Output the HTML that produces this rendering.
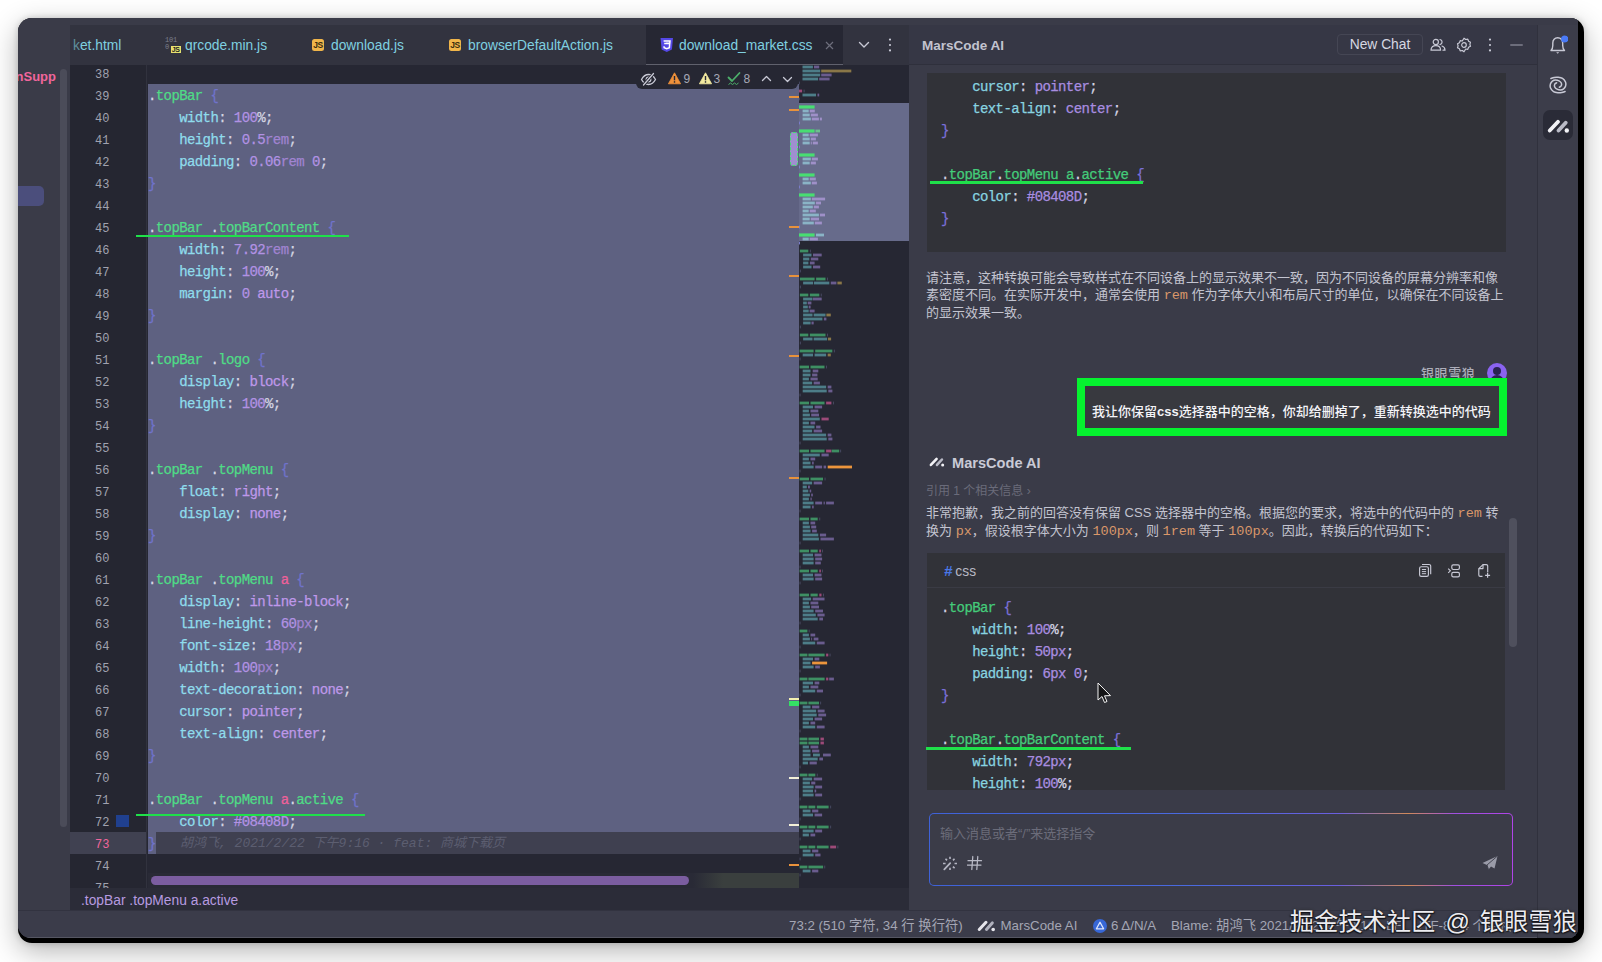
<!DOCTYPE html>
<html lang="zh-CN">
<head>
<meta charset="utf-8">
<title>MarsCode AI - download_market.css</title>
<style>
*{box-sizing:border-box;margin:0;padding:0}
html,body{width:1602px;height:962px;overflow:hidden;background:#fff}
body{font-family:"Liberation Sans","Noto Sans CJK SC",sans-serif;font-size:13px;color:#c9cad6;position:relative}
.abs{position:absolute}
.mono{font-family:"Liberation Mono","Noto Sans CJK SC",monospace}
#shadow{left:18px;top:18px;width:1566px;height:925px;border-radius:14px;background:#000;box-shadow:0 8px 28px rgba(0,0,0,.30),0 0 6px rgba(0,0,0,.18);overflow:hidden}
#win{left:0;top:0;width:1560px;height:920px;border-radius:13px 3px 9px 13px;background:#3b3c4a;overflow:hidden}
/* everything inside #win is positioned relative to the page: offset -18 */
#win>.in{position:absolute;left:-18px;top:-18px;width:1602px;height:962px}
#topstrip{left:18px;top:18px;width:1560px;height:7px;background:#3a3b48}
#sidebar{left:18px;top:25px;width:52px;height:885px;background:#3a3b48}
#tabbar{left:70px;top:25px;width:839px;height:40px;background:#32333f}
.tab{top:25px;height:40px;line-height:41px;font-size:13.8px;color:#7fd0e0;white-space:nowrap}
#editor{left:70px;top:65px;width:839px;height:823px;background:#262733;overflow:hidden}
#gutter{left:70px;top:65px;width:76px;height:823px;background:#252631}
.ln{left:70px;width:39.5px;text-align:right;font-size:12px;height:22px;line-height:22px;color:#a0a2af}
.cl{left:148px;height:22px;line-height:22px;font-size:14px;letter-spacing:-.6px;-webkit-text-stroke:.25px currentColor;white-space:pre;color:#d4d5e2}
.g{color:#4fdc86}.p{color:#8fdcec}.b{color:#7073cc}.v{color:#b292e4}.u{color:#a184d2}.k{color:#bf98ea}.t{color:#f0609a}.w{color:#d9dae6}
#crumb{left:70px;top:888px;width:839px;height:22px;background:#2b2c38;color:#b79be0;font-size:13.8px;line-height:25px;padding-left:11px}
#status{left:18px;top:910px;width:1560px;height:28px;background:#3b3c4a;font-size:13px;color:#a3a5b3;line-height:30px}
#ai{left:909px;top:25px;width:629px;height:885px;background:#3a3b48}
#aihead{left:909px;top:25px;width:629px;height:40px;background:#363745;border-bottom:1px solid #2f303c}
#rstrip{left:1537px;top:25px;width:41px;height:913px;background:#3c3d4a;border-left:1px solid #30313d}
.cb{background:#313238}
.al{height:22px;line-height:22px;font-size:14px;letter-spacing:-.6px;-webkit-text-stroke:.25px currentColor;white-space:pre;color:#d4d5e2}
.ag{color:#44cc7a}.ap{color:#88d4e0}.ab{color:#7b70d8}.av{color:#a98de0}.aw{color:#d4d5e2}
.para{font-size:13px;line-height:17px;color:#c3c4d0}
.or{color:#d9976a;font-family:"Liberation Mono",monospace;font-size:13.5px}
.gl{background:#1fe04a;height:2px}
</style>
</head>
<body>
<div id="shadow" class="abs"><div id="win" class="abs"><div class="in">
<div id="topstrip" class="abs"></div>
<div id="sidebar" class="abs"></div>
<div class="abs" style="left:18px;top:186px;width:26px;height:20px;background:#4b4e7c;border-radius:0 5px 5px 0"></div>
<div class="abs" style="left:60px;top:69px;width:7px;height:758px;background:#4b4c59;border-radius:4px"></div>
<div class="abs" style="left:8px;top:67px;width:48px;height:20px;line-height:20px;font-size:13px;font-weight:bold;color:#f0669c;white-space:nowrap;overflow:hidden;text-align:right">nSupp</div>
<div id="tabbar" class="abs"></div>
<div class="abs" style="left:646px;top:25px;width:197px;height:40px;background:#262733"></div>
<div class="abs" style="left:646px;top:64px;width:197px;height:1.5px;background:#60616d"></div>
<div class="abs tab" style="left:73px"><span style="color:#5e8f9c">k</span>et.html</div>
<div class="abs tab" style="left:185px">qrcode.min.js</div>
<div class="abs tab" style="left:331px">download.js</div>
<div class="abs tab" style="left:468px">browserDefaultAction.js</div>
<div class="abs tab" style="left:679px">download_market.css</div>
<svg class="abs" style="left:824.5px;top:40.500px" width="9" height="9" viewBox="0 0 9 9"><path d="M1 1l7 7M8 1L1 8" stroke="#6d6e7c" stroke-width="1.200"/></svg>
<div id="editor" class="abs"></div>
<div id="gutter" class="abs"></div>
<div class="abs" style="left:146px;top:65px;width:1px;height:823px;background:#31323e"></div>
<div class="abs" style="left:148px;top:84px;width:651px;height:748px;background:#5e6181"></div>
<div class="abs" style="left:70px;top:832px;width:76px;height:22px;background:#404151"></div>
<div class="abs" style="left:156px;top:832px;width:643px;height:22px;background:#3f4050"></div>
<div class="abs" style="left:148px;top:832px;width:8px;height:22px;background:#5e6181"></div>
<div class="abs ln mono" style="top:64px">38</div>
<div class="abs ln mono" style="top:86px">39</div>
<div class="abs cl mono" style="top:85px"><span class="w">.</span><span class="g">topBar</span> <span class="b">{</span></div>
<div class="abs ln mono" style="top:108px">40</div>
<div class="abs cl mono" style="top:107px">    <span class="p">width</span>: <span class="v">100</span>%;</div>
<div class="abs ln mono" style="top:130px">41</div>
<div class="abs cl mono" style="top:129px">    <span class="p">height</span>: <span class="v">0.5</span><span class="u">rem</span>;</div>
<div class="abs ln mono" style="top:152px">42</div>
<div class="abs cl mono" style="top:151px">    <span class="p">padding</span>: <span class="v">0.06</span><span class="u">rem</span> <span class="v">0</span>;</div>
<div class="abs ln mono" style="top:174px">43</div>
<div class="abs cl mono" style="top:173px"><span class="b">}</span></div>
<div class="abs ln mono" style="top:196px">44</div>
<div class="abs ln mono" style="top:218px">45</div>
<div class="abs cl mono" style="top:217px"><span class="w">.</span><span class="g">topBar</span> <span class="w">.</span><span class="g">topBarContent</span> <span class="b">{</span></div>
<div class="abs ln mono" style="top:240px">46</div>
<div class="abs cl mono" style="top:239px">    <span class="p">width</span>: <span class="v">7.92</span><span class="u">rem</span>;</div>
<div class="abs ln mono" style="top:262px">47</div>
<div class="abs cl mono" style="top:261px">    <span class="p">height</span>: <span class="v">100</span>%;</div>
<div class="abs ln mono" style="top:284px">48</div>
<div class="abs cl mono" style="top:283px">    <span class="p">margin</span>: <span class="v">0</span> <span class="k">auto</span>;</div>
<div class="abs ln mono" style="top:306px">49</div>
<div class="abs cl mono" style="top:305px"><span class="b">}</span></div>
<div class="abs ln mono" style="top:328px">50</div>
<div class="abs ln mono" style="top:350px">51</div>
<div class="abs cl mono" style="top:349px"><span class="w">.</span><span class="g">topBar</span> <span class="w">.</span><span class="g">logo</span> <span class="b">{</span></div>
<div class="abs ln mono" style="top:372px">52</div>
<div class="abs cl mono" style="top:371px">    <span class="p">display</span>: <span class="k">block</span>;</div>
<div class="abs ln mono" style="top:394px">53</div>
<div class="abs cl mono" style="top:393px">    <span class="p">height</span>: <span class="v">100</span>%;</div>
<div class="abs ln mono" style="top:416px">54</div>
<div class="abs cl mono" style="top:415px"><span class="b">}</span></div>
<div class="abs ln mono" style="top:438px">55</div>
<div class="abs ln mono" style="top:460px">56</div>
<div class="abs cl mono" style="top:459px"><span class="w">.</span><span class="g">topBar</span> <span class="w">.</span><span class="g">topMenu</span> <span class="b">{</span></div>
<div class="abs ln mono" style="top:482px">57</div>
<div class="abs cl mono" style="top:481px">    <span class="p">float</span>: <span class="k">right</span>;</div>
<div class="abs ln mono" style="top:504px">58</div>
<div class="abs cl mono" style="top:503px">    <span class="p">display</span>: <span class="k">none</span>;</div>
<div class="abs ln mono" style="top:526px">59</div>
<div class="abs cl mono" style="top:525px"><span class="b">}</span></div>
<div class="abs ln mono" style="top:548px">60</div>
<div class="abs ln mono" style="top:570px">61</div>
<div class="abs cl mono" style="top:569px"><span class="w">.</span><span class="g">topBar</span> <span class="w">.</span><span class="g">topMenu</span> <span class="t">a</span> <span class="b">{</span></div>
<div class="abs ln mono" style="top:592px">62</div>
<div class="abs cl mono" style="top:591px">    <span class="p">display</span>: <span class="k">inline-block</span>;</div>
<div class="abs ln mono" style="top:614px">63</div>
<div class="abs cl mono" style="top:613px">    <span class="p">line-height</span>: <span class="v">60</span><span class="u">px</span>;</div>
<div class="abs ln mono" style="top:636px">64</div>
<div class="abs cl mono" style="top:635px">    <span class="p">font-size</span>: <span class="v">18</span><span class="u">px</span>;</div>
<div class="abs ln mono" style="top:658px">65</div>
<div class="abs cl mono" style="top:657px">    <span class="p">width</span>: <span class="v">100</span><span class="u">px</span>;</div>
<div class="abs ln mono" style="top:680px">66</div>
<div class="abs cl mono" style="top:679px">    <span class="p">text-decoration</span>: <span class="k">none</span>;</div>
<div class="abs ln mono" style="top:702px">67</div>
<div class="abs cl mono" style="top:701px">    <span class="p">cursor</span>: <span class="k">pointer</span>;</div>
<div class="abs ln mono" style="top:724px">68</div>
<div class="abs cl mono" style="top:723px">    <span class="p">text-align</span>: <span class="k">center</span>;</div>
<div class="abs ln mono" style="top:746px">69</div>
<div class="abs cl mono" style="top:745px"><span class="b">}</span></div>
<div class="abs ln mono" style="top:768px">70</div>
<div class="abs ln mono" style="top:790px">71</div>
<div class="abs cl mono" style="top:789px"><span class="w">.</span><span class="g">topBar</span> <span class="w">.</span><span class="g">topMenu</span> <span class="t">a</span><span class="w">.</span><span class="g">active</span> <span class="b">{</span></div>
<div class="abs ln mono" style="top:812px">72</div>
<div class="abs cl mono" style="top:811px">    <span class="p">color</span>: <span class="v">#08408D</span>;</div>
<div class="abs ln mono" style="top:834px;color:#f0669c">73</div>
<div class="abs cl mono" style="top:833px"><span class="b">}</span></div>
<div class="abs ln mono" style="top:856px">74</div>
<div class="abs ln mono" style="top:878px">75</div>
<div class="abs mono" style="left:180px;top:833px;height:22px;line-height:22px;font-size:13px;font-style:italic;color:#5c5e70;white-space:pre">胡鸿飞, 2021/2/22 下午9:16 · feat: 商城下载页</div>
<div class="abs" style="left:116px;top:815px;width:13px;height:12px;background:#20408f"></div>
<div class="abs gl" style="left:136px;top:235px;width:213px"></div>
<div class="abs gl" style="left:136px;top:814px;width:229px"></div>
<div class="abs" style="left:148px;top:873px;width:651px;height:15px;background:linear-gradient(90deg,#292a36 0,#292a36 545px,#3a3f3e 575px,#3a3f3e 100%)"></div>
<div class="abs" style="left:151px;top:876px;width:538px;height:9px;background:#7b5da0;border-radius:5px"></div>
<div class="abs" style="left:636px;top:65px;width:162px;height:24px;background:#262733;border-radius:0 0 6px 6px"></div>
<svg class="abs" style="left:799px;top:65px" width="110" height="823" viewBox="0 0 110 823"><rect x="0" y="0" width="110" height="823" fill="#262733"/><rect x="0" y="38" width="110" height="138" fill="#676b8b"/><rect x="3.5" y="0.6" width="10.4" height="2.8" fill="#4d7d88"/><rect x="15.0" y="0.6" width="5.2" height="2.8" fill="#6a5c8e"/><rect x="3.5" y="4.6" width="17.7" height="2.8" fill="#4d7d88"/><rect x="22.2" y="4.6" width="30.1" height="2.8" fill="#8a7748"/><rect x="3.5" y="8.6" width="17.7" height="2.8" fill="#4d7d88"/><rect x="22.2" y="8.6" width="10.4" height="2.8" fill="#6a5c8e"/><rect x="3.5" y="12.6" width="15.6" height="2.8" fill="#4d7d88"/><rect x="20.2" y="12.6" width="10.4" height="2.8" fill="#6a5c8e"/><rect x="0.0" y="16.6" width="0.8" height="2.8" fill="#4a4c66"/><rect x="0.0" y="24.6" width="3.1" height="2.8" fill="#9c4a78"/><rect x="4.6" y="24.6" width="1.0" height="2.8" fill="#4a4c66"/><rect x="3.5" y="28.6" width="13.5" height="2.8" fill="#4d7d88"/><rect x="18.5" y="28.6" width="1.7" height="2.8" fill="#6a5c8e"/><rect x="0.0" y="32.6" width="0.8" height="2.8" fill="#4a4c66"/><rect x="0.0" y="40.4" width="15.6" height="3.2" fill="#48de72"/><rect x="3.6" y="44.6" width="6.1" height="2.8" fill="#8ab4c6"/><rect x="10.7" y="44.6" width="5.1" height="2.8" fill="#9f90c8"/><rect x="3.6" y="48.6" width="7.1" height="2.8" fill="#8ab4c6"/><rect x="11.8" y="48.6" width="7.1" height="2.8" fill="#9f90c8"/><rect x="3.6" y="52.6" width="8.2" height="2.8" fill="#8ab4c6"/><rect x="12.8" y="52.6" width="7.1" height="2.8" fill="#9f90c8"/><rect x="20.9" y="52.6" width="2.0" height="2.8" fill="#9f90c8"/><rect x="0.0" y="56.6" width="1.0" height="2.8" fill="#7a7cc8"/><rect x="0.0" y="64.4" width="15.6" height="3.2" fill="#48de72"/><rect x="16.5" y="64.6" width="4.5" height="2.8" fill="#6ec08f"/><rect x="3.6" y="68.6" width="6.1" height="2.8" fill="#8ab4c6"/><rect x="10.7" y="68.6" width="8.2" height="2.8" fill="#9f90c8"/><rect x="3.6" y="72.6" width="7.1" height="2.8" fill="#8ab4c6"/><rect x="11.8" y="72.6" width="5.1" height="2.8" fill="#9f90c8"/><rect x="3.6" y="76.6" width="7.1" height="2.8" fill="#8ab4c6"/><rect x="11.8" y="76.6" width="1.0" height="2.8" fill="#9f90c8"/><rect x="13.8" y="76.6" width="5.1" height="2.8" fill="#9f90c8"/><rect x="0.0" y="80.6" width="1.0" height="2.8" fill="#7a7cc8"/><rect x="0.0" y="88.4" width="15.6" height="3.2" fill="#48de72"/><rect x="3.6" y="92.6" width="8.2" height="2.8" fill="#8ab4c6"/><rect x="12.8" y="92.6" width="6.1" height="2.8" fill="#9f90c8"/><rect x="3.6" y="96.6" width="7.1" height="2.8" fill="#8ab4c6"/><rect x="11.8" y="96.6" width="5.1" height="2.8" fill="#9f90c8"/><rect x="0.0" y="100.6" width="1.0" height="2.8" fill="#7a7cc8"/><rect x="0.0" y="108.4" width="15.6" height="3.2" fill="#48de72"/><rect x="3.6" y="112.6" width="6.1" height="2.8" fill="#8ab4c6"/><rect x="10.7" y="112.6" width="6.1" height="2.8" fill="#9f90c8"/><rect x="3.6" y="116.6" width="8.2" height="2.8" fill="#8ab4c6"/><rect x="12.8" y="116.6" width="5.1" height="2.8" fill="#9f90c8"/><rect x="0.0" y="120.6" width="1.0" height="2.8" fill="#7a7cc8"/><rect x="0.0" y="128.4" width="15.6" height="3.2" fill="#48de72"/><rect x="3.6" y="132.6" width="8.2" height="2.8" fill="#8ab4c6"/><rect x="12.8" y="132.6" width="13.3" height="2.8" fill="#9f90c8"/><rect x="3.6" y="136.6" width="12.2" height="2.8" fill="#8ab4c6"/><rect x="16.9" y="136.6" width="5.1" height="2.8" fill="#9f90c8"/><rect x="3.6" y="140.6" width="10.2" height="2.8" fill="#8ab4c6"/><rect x="14.8" y="140.6" width="5.1" height="2.8" fill="#9f90c8"/><rect x="3.6" y="144.6" width="6.1" height="2.8" fill="#8ab4c6"/><rect x="10.7" y="144.6" width="6.1" height="2.8" fill="#9f90c8"/><rect x="3.6" y="148.6" width="16.3" height="2.8" fill="#8ab4c6"/><rect x="20.9" y="148.6" width="5.1" height="2.8" fill="#9f90c8"/><rect x="3.6" y="152.6" width="7.1" height="2.8" fill="#8ab4c6"/><rect x="11.8" y="152.6" width="8.2" height="2.8" fill="#9f90c8"/><rect x="3.6" y="156.6" width="11.2" height="2.8" fill="#8ab4c6"/><rect x="15.8" y="156.6" width="7.1" height="2.8" fill="#9f90c8"/><rect x="0.0" y="160.6" width="1.0" height="2.8" fill="#7a7cc8"/><rect x="0.0" y="168.4" width="15.6" height="3.2" fill="#48de72"/><rect x="17.0" y="168.6" width="8.0" height="2.8" fill="#8ab4c6"/><rect x="3.6" y="172.6" width="6.1" height="2.8" fill="#8ab4c6"/><rect x="10.7" y="172.6" width="8.2" height="2.8" fill="#9f90c8"/><rect x="0.0" y="176.6" width="1.0" height="2.8" fill="#7a7cc8"/><rect x="0.9" y="184.6" width="8.4" height="2.8" fill="#3e8f63"/><rect x="10.9" y="184.6" width="0.9" height="2.8" fill="#4a4c66"/><rect x="4.1" y="188.6" width="8.4" height="2.8" fill="#4d7d88"/><rect x="14.0" y="188.6" width="8.7" height="2.8" fill="#6a5c8e"/><rect x="4.1" y="192.6" width="6.2" height="2.8" fill="#4d7d88"/><rect x="11.8" y="192.6" width="7.5" height="2.8" fill="#6a5c8e"/><rect x="4.1" y="196.6" width="5.3" height="2.8" fill="#4d7d88"/><rect x="10.9" y="196.6" width="4.7" height="2.8" fill="#6a5c8e"/><rect x="4.1" y="200.6" width="8.4" height="2.8" fill="#4d7d88"/><rect x="14.0" y="200.6" width="7.2" height="2.8" fill="#6a5c8e"/><rect x="0.9" y="204.6" width="0.9" height="2.8" fill="#4a4c66"/><rect x="0.9" y="212.6" width="14.7" height="2.8" fill="#3e8f63"/><rect x="17.1" y="212.6" width="9.4" height="2.8" fill="#3e8f63"/><rect x="28.1" y="212.6" width="0.9" height="2.8" fill="#4a4c66"/><rect x="4.1" y="216.6" width="10.0" height="2.8" fill="#4d7d88"/><rect x="15.0" y="216.6" width="15.3" height="2.8" fill="#4d7d88"/><rect x="31.8" y="216.6" width="5.6" height="2.8" fill="#6a5c8e"/><rect x="38.4" y="216.6" width="4.4" height="2.8" fill="#8a7748"/><rect x="0.9" y="220.6" width="0.9" height="2.8" fill="#4a4c66"/><rect x="0.9" y="228.6" width="8.4" height="2.8" fill="#3e8f63"/><rect x="10.9" y="228.6" width="9.4" height="2.8" fill="#3e8f63"/><rect x="21.8" y="228.6" width="0.9" height="2.8" fill="#4a4c66"/><rect x="4.1" y="232.6" width="9.4" height="2.8" fill="#4d7d88"/><rect x="14.0" y="232.6" width="8.7" height="2.8" fill="#6a5c8e"/><rect x="4.1" y="236.6" width="3.7" height="2.8" fill="#4d7d88"/><rect x="8.7" y="236.6" width="3.7" height="2.8" fill="#6a5c8e"/><rect x="4.1" y="240.6" width="4.7" height="2.8" fill="#4d7d88"/><rect x="9.7" y="240.6" width="1.9" height="2.8" fill="#6a5c8e"/><rect x="4.1" y="244.6" width="5.6" height="2.8" fill="#4d7d88"/><rect x="10.6" y="244.6" width="5.0" height="2.8" fill="#6a5c8e"/><rect x="4.1" y="248.6" width="9.4" height="2.8" fill="#4d7d88"/><rect x="14.7" y="248.6" width="11.8" height="2.8" fill="#4d7d88"/><rect x="27.4" y="248.6" width="4.4" height="2.8" fill="#8a7748"/><rect x="4.1" y="252.6" width="19.3" height="2.8" fill="#4d7d88"/><rect x="24.9" y="252.6" width="2.5" height="2.8" fill="#6a5c8e"/><rect x="4.1" y="256.6" width="7.5" height="2.8" fill="#4d7d88"/><rect x="12.5" y="256.6" width="2.2" height="2.8" fill="#6a5c8e"/><rect x="0.9" y="260.6" width="0.9" height="2.8" fill="#4a4c66"/><rect x="0.9" y="268.6" width="8.4" height="2.8" fill="#3e8f63"/><rect x="10.9" y="268.6" width="15.6" height="2.8" fill="#3e8f63"/><rect x="28.1" y="268.6" width="0.9" height="2.8" fill="#4a4c66"/><rect x="4.1" y="272.6" width="9.4" height="2.8" fill="#4d7d88"/><rect x="14.7" y="272.6" width="13.4" height="2.8" fill="#4d7d88"/><rect x="29.0" y="272.6" width="3.1" height="2.8" fill="#8a7748"/><rect x="0.9" y="276.6" width="0.9" height="2.8" fill="#4a4c66"/><rect x="0.6" y="284.6" width="14.0" height="2.8" fill="#3e8f63"/><rect x="16.2" y="284.6" width="17.1" height="2.8" fill="#3e8f63"/><rect x="34.9" y="284.6" width="0.9" height="2.8" fill="#4a4c66"/><rect x="3.7" y="288.6" width="10.3" height="2.8" fill="#4d7d88"/><rect x="15.6" y="288.6" width="11.5" height="2.8" fill="#4d7d88"/><rect x="28.7" y="288.6" width="3.1" height="2.8" fill="#8a7748"/><rect x="0.6" y="292.6" width="0.9" height="2.8" fill="#4a4c66"/><rect x="0.6" y="300.6" width="9.4" height="2.8" fill="#3e8f63"/><rect x="11.5" y="300.6" width="14.0" height="2.8" fill="#3e8f63"/><rect x="27.1" y="300.6" width="0.9" height="2.8" fill="#4a4c66"/><rect x="3.7" y="304.6" width="7.8" height="2.8" fill="#4d7d88"/><rect x="13.7" y="304.6" width="5.6" height="2.8" fill="#6a5c8e"/><rect x="3.7" y="308.6" width="7.8" height="2.8" fill="#4d7d88"/><rect x="13.1" y="308.6" width="5.3" height="2.8" fill="#6a5c8e"/><rect x="3.7" y="312.6" width="6.2" height="2.8" fill="#4d7d88"/><rect x="11.5" y="312.6" width="7.2" height="2.8" fill="#6a5c8e"/><rect x="3.7" y="316.6" width="9.4" height="2.8" fill="#4d7d88"/><rect x="14.7" y="316.6" width="6.2" height="2.8" fill="#6a5c8e"/><rect x="3.7" y="320.6" width="23.4" height="2.8" fill="#4d7d88"/><rect x="28.7" y="320.6" width="3.7" height="2.8" fill="#6a5c8e"/><rect x="3.7" y="324.6" width="24.0" height="2.8" fill="#4d7d88"/><rect x="29.3" y="324.6" width="4.1" height="2.8" fill="#6a5c8e"/><rect x="0.6" y="328.6" width="0.9" height="2.8" fill="#4a4c66"/><rect x="0.6" y="336.6" width="9.4" height="2.8" fill="#3e8f63"/><rect x="11.5" y="336.6" width="14.0" height="2.8" fill="#3e8f63"/><rect x="27.1" y="336.6" width="5.3" height="2.8" fill="#9c4a78"/><rect x="34.0" y="336.6" width="0.9" height="2.8" fill="#4a4c66"/><rect x="3.7" y="340.6" width="10.3" height="2.8" fill="#4d7d88"/><rect x="15.6" y="340.6" width="7.5" height="2.8" fill="#6a5c8e"/><rect x="3.7" y="344.6" width="6.2" height="2.8" fill="#4d7d88"/><rect x="11.5" y="344.6" width="7.8" height="2.8" fill="#6a5c8e"/><rect x="3.7" y="348.6" width="7.2" height="2.8" fill="#4d7d88"/><rect x="12.2" y="348.6" width="7.8" height="2.8" fill="#6a5c8e"/><rect x="3.7" y="352.6" width="17.1" height="2.8" fill="#4d7d88"/><rect x="22.5" y="352.6" width="7.2" height="2.8" fill="#9c4a78"/><rect x="3.7" y="356.6" width="6.2" height="2.8" fill="#4d7d88"/><rect x="11.5" y="356.6" width="4.7" height="2.8" fill="#6a5c8e"/><rect x="3.7" y="360.6" width="11.8" height="2.8" fill="#4d7d88"/><rect x="17.1" y="360.6" width="4.4" height="2.8" fill="#6a5c8e"/><rect x="3.7" y="364.6" width="9.4" height="2.8" fill="#4d7d88"/><rect x="14.7" y="364.6" width="8.4" height="2.8" fill="#6a5c8e"/><rect x="3.7" y="368.6" width="23.4" height="2.8" fill="#4d7d88"/><rect x="28.7" y="368.6" width="3.7" height="2.8" fill="#6a5c8e"/><rect x="3.7" y="372.6" width="24.0" height="2.8" fill="#4d7d88"/><rect x="29.3" y="372.6" width="4.1" height="2.8" fill="#6a5c8e"/><rect x="0.6" y="376.6" width="0.9" height="2.8" fill="#4a4c66"/><rect x="0.6" y="384.6" width="9.4" height="2.8" fill="#3e8f63"/><rect x="11.5" y="384.6" width="14.0" height="2.8" fill="#3e8f63"/><rect x="27.1" y="384.6" width="5.3" height="2.8" fill="#9c4a78"/><rect x="32.7" y="384.6" width="7.5" height="2.8" fill="#3e8f63"/><rect x="41.2" y="384.6" width="0.9" height="2.8" fill="#4a4c66"/><rect x="3.7" y="388.6" width="17.1" height="2.8" fill="#4d7d88"/><rect x="22.5" y="388.6" width="7.2" height="2.8" fill="#6a5c8e"/><rect x="3.7" y="392.6" width="6.2" height="2.8" fill="#4d7d88"/><rect x="11.5" y="392.6" width="4.7" height="2.8" fill="#6a5c8e"/><rect x="3.7" y="396.6" width="7.8" height="2.8" fill="#4d7d88"/><rect x="13.1" y="396.6" width="1.6" height="2.8" fill="#6a5c8e"/><rect x="3.7" y="400.6" width="10.9" height="2.8" fill="#4d7d88"/><rect x="16.2" y="400.6" width="6.9" height="2.8" fill="#6a5c8e"/><rect x="24.6" y="400.6" width="2.5" height="2.8" fill="#6a5c8e"/><rect x="28.7" y="400.6" width="24.3" height="2.8" fill="#ec953c"/><rect x="0.6" y="404.6" width="0.9" height="2.8" fill="#4a4c66"/><rect x="0.6" y="412.6" width="9.4" height="2.8" fill="#3e8f63"/><rect x="11.5" y="412.6" width="12.5" height="2.8" fill="#3e8f63"/><rect x="25.6" y="412.6" width="0.9" height="2.8" fill="#4a4c66"/><rect x="3.7" y="416.6" width="9.4" height="2.8" fill="#4d7d88"/><rect x="14.7" y="416.6" width="8.4" height="2.8" fill="#6a5c8e"/><rect x="3.7" y="420.6" width="4.1" height="2.8" fill="#4d7d88"/><rect x="9.0" y="420.6" width="1.9" height="2.8" fill="#6a5c8e"/><rect x="3.7" y="424.6" width="5.6" height="2.8" fill="#4d7d88"/><rect x="10.6" y="424.6" width="1.6" height="2.8" fill="#6a5c8e"/><rect x="3.7" y="428.6" width="7.2" height="2.8" fill="#4d7d88"/><rect x="12.2" y="428.6" width="1.6" height="2.8" fill="#6a5c8e"/><rect x="3.7" y="432.6" width="6.2" height="2.8" fill="#4d7d88"/><rect x="11.5" y="432.6" width="1.2" height="2.8" fill="#6a5c8e"/><rect x="3.7" y="436.6" width="10.9" height="2.8" fill="#4d7d88"/><rect x="16.2" y="436.6" width="6.9" height="2.8" fill="#6a5c8e"/><rect x="24.6" y="436.6" width="1.2" height="2.8" fill="#6a5c8e"/><rect x="27.1" y="436.6" width="7.8" height="2.8" fill="#6a5c8e"/><rect x="3.7" y="440.6" width="7.8" height="2.8" fill="#4d7d88"/><rect x="13.1" y="440.6" width="1.6" height="2.8" fill="#6a5c8e"/><rect x="0.6" y="444.6" width="0.9" height="2.8" fill="#4a4c66"/><rect x="0.6" y="452.6" width="9.4" height="2.8" fill="#3e8f63"/><rect x="11.5" y="452.6" width="7.2" height="2.8" fill="#3e8f63"/><rect x="20.3" y="452.6" width="0.9" height="2.8" fill="#4a4c66"/><rect x="3.7" y="456.6" width="6.2" height="2.8" fill="#4d7d88"/><rect x="11.5" y="456.6" width="4.7" height="2.8" fill="#6a5c8e"/><rect x="3.7" y="460.6" width="7.2" height="2.8" fill="#4d7d88"/><rect x="12.2" y="460.6" width="5.0" height="2.8" fill="#6a5c8e"/><rect x="3.7" y="464.6" width="7.8" height="2.8" fill="#4d7d88"/><rect x="13.1" y="464.6" width="4.7" height="2.8" fill="#6a5c8e"/><rect x="3.7" y="468.6" width="15.6" height="2.8" fill="#4d7d88"/><rect x="20.9" y="468.6" width="6.2" height="2.8" fill="#6a5c8e"/><rect x="3.7" y="472.6" width="16.2" height="2.8" fill="#4d7d88"/><rect x="21.5" y="472.6" width="13.4" height="2.8" fill="#6a5c8e"/><rect x="0.6" y="476.6" width="0.9" height="2.8" fill="#4a4c66"/><rect x="0.6" y="484.6" width="9.4" height="2.8" fill="#3e8f63"/><rect x="11.5" y="484.6" width="7.2" height="2.8" fill="#3e8f63"/><rect x="20.3" y="484.6" width="1.6" height="2.8" fill="#9c4a78"/><rect x="23.1" y="484.6" width="0.9" height="2.8" fill="#4a4c66"/><rect x="3.7" y="488.6" width="10.3" height="2.8" fill="#4d7d88"/><rect x="15.6" y="488.6" width="6.9" height="2.8" fill="#6a5c8e"/><rect x="3.7" y="492.6" width="10.9" height="2.8" fill="#4d7d88"/><rect x="16.2" y="492.6" width="6.9" height="2.8" fill="#6a5c8e"/><rect x="3.7" y="496.6" width="10.9" height="2.8" fill="#4d7d88"/><rect x="16.2" y="496.6" width="5.6" height="2.8" fill="#6a5c8e"/><rect x="0.6" y="500.6" width="0.9" height="2.8" fill="#4a4c66"/><rect x="0.6" y="504.6" width="9.4" height="2.8" fill="#3e8f63"/><rect x="11.5" y="504.6" width="7.2" height="2.8" fill="#3e8f63"/><rect x="20.3" y="504.6" width="1.6" height="2.8" fill="#9c4a78"/><rect x="23.1" y="504.6" width="0.9" height="2.8" fill="#4a4c66"/><rect x="3.7" y="508.6" width="10.3" height="2.8" fill="#4d7d88"/><rect x="15.6" y="508.6" width="6.9" height="2.8" fill="#6a5c8e"/><rect x="3.7" y="512.6" width="10.9" height="2.8" fill="#4d7d88"/><rect x="16.2" y="512.6" width="6.9" height="2.8" fill="#6a5c8e"/><rect x="0.6" y="516.6" width="0.9" height="2.8" fill="#4a4c66"/><rect x="0.6" y="528.6" width="9.4" height="2.8" fill="#3e8f63"/><rect x="11.5" y="528.6" width="7.2" height="2.8" fill="#3e8f63"/><rect x="20.3" y="528.6" width="2.2" height="2.8" fill="#9c4a78"/><rect x="24.0" y="528.6" width="0.9" height="2.8" fill="#4a4c66"/><rect x="3.7" y="532.6" width="8.4" height="2.8" fill="#4d7d88"/><rect x="13.7" y="532.6" width="11.8" height="2.8" fill="#6a5c8e"/><rect x="3.7" y="536.6" width="6.2" height="2.8" fill="#4d7d88"/><rect x="11.5" y="536.6" width="7.8" height="2.8" fill="#6a5c8e"/><rect x="3.7" y="540.6" width="7.2" height="2.8" fill="#4d7d88"/><rect x="12.2" y="540.6" width="7.8" height="2.8" fill="#6a5c8e"/><rect x="3.7" y="544.6" width="10.9" height="2.8" fill="#4d7d88"/><rect x="16.2" y="544.6" width="7.8" height="2.8" fill="#6a5c8e"/><rect x="3.7" y="548.6" width="13.1" height="2.8" fill="#4d7d88"/><rect x="18.4" y="548.6" width="7.2" height="2.8" fill="#6a5c8e"/><rect x="3.7" y="552.6" width="15.0" height="2.8" fill="#4d7d88"/><rect x="20.3" y="552.6" width="3.7" height="2.8" fill="#6a5c8e"/><rect x="0.6" y="556.6" width="0.9" height="2.8" fill="#4a4c66"/><rect x="0.6" y="564.6" width="7.8" height="2.8" fill="#3e8f63"/><rect x="9.7" y="564.6" width="0.9" height="2.8" fill="#4a4c66"/><rect x="3.7" y="568.6" width="6.2" height="2.8" fill="#4d7d88"/><rect x="11.5" y="568.6" width="4.7" height="2.8" fill="#6a5c8e"/><rect x="3.7" y="572.6" width="7.2" height="2.8" fill="#4d7d88"/><rect x="12.2" y="572.6" width="0.9" height="2.8" fill="#6a5c8e"/><rect x="14.7" y="572.6" width="4.7" height="2.8" fill="#6a5c8e"/><rect x="3.7" y="576.6" width="12.5" height="2.8" fill="#4d7d88"/><rect x="17.8" y="576.6" width="7.8" height="2.8" fill="#6a5c8e"/><rect x="0.6" y="580.6" width="0.9" height="2.8" fill="#4a4c66"/><rect x="0.6" y="588.6" width="7.8" height="2.8" fill="#3e8f63"/><rect x="9.4" y="588.6" width="16.2" height="2.8" fill="#3e8f63"/><rect x="27.1" y="588.6" width="2.2" height="2.8" fill="#9c4a78"/><rect x="30.6" y="588.6" width="0.9" height="2.8" fill="#4a4c66"/><rect x="3.7" y="592.6" width="10.3" height="2.8" fill="#4d7d88"/><rect x="15.6" y="592.6" width="4.7" height="2.8" fill="#6a5c8e"/><rect x="3.7" y="596.6" width="7.8" height="2.8" fill="#4d7d88"/><rect x="13.1" y="596.6" width="15.0" height="2.8" fill="#ec953c"/><rect x="3.7" y="600.6" width="10.9" height="2.8" fill="#4d7d88"/><rect x="16.2" y="600.6" width="4.7" height="2.8" fill="#6a5c8e"/><rect x="0.6" y="604.6" width="0.9" height="2.8" fill="#4a4c66"/><rect x="0.6" y="612.6" width="7.8" height="2.8" fill="#3e8f63"/><rect x="9.4" y="612.6" width="16.2" height="2.8" fill="#3e8f63"/><rect x="27.1" y="612.6" width="2.2" height="2.8" fill="#9c4a78"/><rect x="30.2" y="612.6" width="4.7" height="2.8" fill="#6a5c8e"/><rect x="3.7" y="616.6" width="10.3" height="2.8" fill="#4d7d88"/><rect x="15.6" y="616.6" width="4.7" height="2.8" fill="#6a5c8e"/><rect x="3.7" y="620.6" width="6.2" height="2.8" fill="#4d7d88"/><rect x="11.5" y="620.6" width="7.8" height="2.8" fill="#6a5c8e"/><rect x="3.7" y="624.6" width="12.5" height="2.8" fill="#4d7d88"/><rect x="17.8" y="624.6" width="6.2" height="2.8" fill="#6a5c8e"/><rect x="0.6" y="628.6" width="0.9" height="2.8" fill="#4a4c66"/><rect x="0.6" y="636.6" width="7.8" height="2.8" fill="#3e8f63"/><rect x="9.4" y="636.6" width="10.6" height="2.8" fill="#3e8f63"/><rect x="21.2" y="636.6" width="0.9" height="2.8" fill="#4a4c66"/><rect x="3.7" y="640.6" width="7.8" height="2.8" fill="#4d7d88"/><rect x="13.1" y="640.6" width="7.2" height="2.8" fill="#6a5c8e"/><rect x="3.7" y="644.6" width="13.4" height="2.8" fill="#4d7d88"/><rect x="18.7" y="644.6" width="6.9" height="2.8" fill="#6a5c8e"/><rect x="3.7" y="648.6" width="14.0" height="2.8" fill="#4d7d88"/><rect x="19.3" y="648.6" width="7.8" height="2.8" fill="#6a5c8e"/><rect x="3.7" y="652.6" width="10.3" height="2.8" fill="#4d7d88"/><rect x="15.6" y="652.6" width="7.5" height="2.8" fill="#6a5c8e"/><rect x="3.7" y="656.6" width="6.2" height="2.8" fill="#4d7d88"/><rect x="11.5" y="656.6" width="4.7" height="2.8" fill="#6a5c8e"/><rect x="3.7" y="660.6" width="12.5" height="2.8" fill="#4d7d88"/><rect x="17.8" y="660.6" width="7.8" height="2.8" fill="#6a5c8e"/><rect x="0.6" y="664.6" width="0.9" height="2.8" fill="#4a4c66"/><rect x="0.6" y="672.6" width="7.8" height="2.8" fill="#3e8f63"/><rect x="9.4" y="672.6" width="10.6" height="2.8" fill="#3e8f63"/><rect x="21.5" y="672.6" width="3.4" height="2.8" fill="#9c4a78"/><rect x="0.6" y="676.6" width="7.8" height="2.8" fill="#3e8f63"/><rect x="9.4" y="676.6" width="10.6" height="2.8" fill="#3e8f63"/><rect x="21.5" y="676.6" width="3.4" height="2.8" fill="#9c4a78"/><rect x="3.7" y="680.6" width="6.2" height="2.8" fill="#4d7d88"/><rect x="11.5" y="680.6" width="7.8" height="2.8" fill="#6a5c8e"/><rect x="3.7" y="684.6" width="7.8" height="2.8" fill="#4d7d88"/><rect x="13.1" y="684.6" width="7.2" height="2.8" fill="#6a5c8e"/><rect x="3.7" y="688.6" width="7.8" height="2.8" fill="#4d7d88"/><rect x="14.0" y="688.6" width="6.9" height="2.8" fill="#4d7d88"/><rect x="24.0" y="688.6" width="7.8" height="2.8" fill="#6a5c8e"/><rect x="3.7" y="692.6" width="15.0" height="2.8" fill="#4d7d88"/><rect x="20.3" y="692.6" width="3.7" height="2.8" fill="#6a5c8e"/><rect x="3.7" y="696.6" width="5.3" height="2.8" fill="#4d7d88"/><rect x="10.6" y="696.6" width="7.2" height="2.8" fill="#6a5c8e"/><rect x="0.6" y="700.6" width="0.9" height="2.8" fill="#4a4c66"/><rect x="0.6" y="708.6" width="7.8" height="2.8" fill="#3e8f63"/><rect x="9.4" y="708.6" width="6.9" height="2.8" fill="#3e8f63"/><rect x="17.8" y="708.6" width="0.9" height="2.8" fill="#4a4c66"/><rect x="3.7" y="712.6" width="9.4" height="2.8" fill="#4d7d88"/><rect x="14.7" y="712.6" width="8.4" height="2.8" fill="#6a5c8e"/><rect x="3.7" y="716.6" width="7.2" height="2.8" fill="#4d7d88"/><rect x="12.2" y="716.6" width="4.1" height="2.8" fill="#6a5c8e"/><rect x="3.7" y="720.6" width="10.9" height="2.8" fill="#4d7d88"/><rect x="16.2" y="720.6" width="6.9" height="2.8" fill="#6a5c8e"/><rect x="3.7" y="724.6" width="10.3" height="2.8" fill="#4d7d88"/><rect x="15.6" y="724.6" width="1.6" height="2.8" fill="#6a5c8e"/><rect x="3.7" y="728.6" width="10.9" height="2.8" fill="#4d7d88"/><rect x="16.2" y="728.6" width="6.9" height="2.8" fill="#6a5c8e"/><rect x="0.6" y="732.6" width="0.9" height="2.8" fill="#4a4c66"/><rect x="0.6" y="740.6" width="7.8" height="2.8" fill="#3e8f63"/><rect x="9.4" y="740.6" width="6.9" height="2.8" fill="#3e8f63"/><rect x="17.8" y="740.6" width="11.8" height="2.8" fill="#3e8f63"/><rect x="31.2" y="740.6" width="0.9" height="2.8" fill="#4a4c66"/><rect x="3.7" y="744.6" width="7.8" height="2.8" fill="#4d7d88"/><rect x="13.1" y="744.6" width="6.2" height="2.8" fill="#6a5c8e"/><rect x="3.7" y="748.6" width="10.3" height="2.8" fill="#4d7d88"/><rect x="15.6" y="748.6" width="7.5" height="2.8" fill="#6a5c8e"/><rect x="0.6" y="752.6" width="0.9" height="2.8" fill="#4a4c66"/><rect x="0.6" y="760.6" width="7.8" height="2.8" fill="#3e8f63"/><rect x="9.4" y="760.6" width="6.9" height="2.8" fill="#3e8f63"/><rect x="17.8" y="760.6" width="11.8" height="2.8" fill="#3e8f63"/><rect x="31.2" y="760.6" width="0.9" height="2.8" fill="#4a4c66"/><rect x="3.7" y="764.6" width="10.9" height="2.8" fill="#4d7d88"/><rect x="16.2" y="764.6" width="6.9" height="2.8" fill="#6a5c8e"/><rect x="3.7" y="768.6" width="6.2" height="2.8" fill="#4d7d88"/><rect x="11.5" y="768.6" width="4.7" height="2.8" fill="#6a5c8e"/><rect x="0.6" y="772.6" width="0.9" height="2.8" fill="#4a4c66"/><rect x="0.6" y="780.6" width="7.8" height="2.8" fill="#3e8f63"/><rect x="9.4" y="780.6" width="6.9" height="2.8" fill="#3e8f63"/><rect x="17.8" y="780.6" width="11.8" height="2.8" fill="#3e8f63"/><rect x="31.2" y="780.6" width="5.9" height="2.8" fill="#9c4a78"/><rect x="38.4" y="780.6" width="0.9" height="2.8" fill="#4a4c66"/><rect x="3.7" y="784.6" width="7.8" height="2.8" fill="#4d7d88"/><rect x="13.1" y="784.6" width="6.2" height="2.8" fill="#6a5c8e"/><rect x="3.7" y="788.6" width="10.9" height="2.8" fill="#4d7d88"/><rect x="16.2" y="788.6" width="5.3" height="2.8" fill="#6a5c8e"/><rect x="0.6" y="792.6" width="0.9" height="2.8" fill="#4a4c66"/><rect x="0.6" y="800.6" width="7.8" height="2.8" fill="#3e8f63"/><rect x="9.4" y="800.6" width="14.7" height="2.8" fill="#3e8f63"/><rect x="25.3" y="800.6" width="0.9" height="2.8" fill="#4a4c66"/><rect x="3.7" y="804.6" width="7.8" height="2.8" fill="#4d7d88"/><rect x="13.1" y="804.6" width="6.2" height="2.8" fill="#6a5c8e"/><rect x="0.6" y="808.6" width="0.9" height="2.8" fill="#4a4c66"/></svg>
<div class="abs" style="left:789px;top:96px;width:10px;height:2px;background:#e8923c"></div>
<div class="abs" style="left:789px;top:109px;width:10px;height:2px;background:#e8923c"></div>
<div class="abs" style="left:789px;top:226px;width:10px;height:2px;background:#e8923c"></div>
<div class="abs" style="left:789px;top:275px;width:10px;height:2px;background:#e8923c"></div>
<div class="abs" style="left:789px;top:355px;width:10px;height:2px;background:#e8923c"></div>
<div class="abs" style="left:789px;top:477px;width:10px;height:2px;background:#e8923c"></div>
<div class="abs" style="left:789px;top:864px;width:10px;height:2px;background:#e8923c"></div>
<div class="abs" style="left:789px;top:777px;width:10px;height:2px;background:#f3f0d8"></div>
<div class="abs" style="left:789px;top:824px;width:10px;height:2px;background:#f3f0d8"></div>
<div class="abs" style="left:789px;top:698px;width:10px;height:2px;background:#f3f0b0"></div>
<div class="abs" style="left:789px;top:701px;width:10px;height:5px;background:#35e065"></div>
<div class="abs" style="left:790px;top:132px;width:8px;height:34px;border:1px dashed #45e070;border-radius:3px;background:#9f8fd0"></div>
<div id="crumb" class="abs">.topBar .topMenu a.active</div>
<div id="status" class="abs"></div>
<div class="abs" style="left:18px;top:910px;width:1560px;height:1px;background:#323340"></div>
<div class="abs" style="left:18px;top:937px;width:1560px;height:1px;background:#565763"></div>
<div class="abs" style="left:789px;top:916px;height:20px;line-height:20px;font-size:13.3px;color:#a4a6b4;white-space:nowrap">73:2 (510 字符, 34 行 换行符)</div>
<div class="abs" style="left:1000.5px;top:916px;height:20px;line-height:20px;font-size:13.3px;color:#a4a6b4;white-space:nowrap">MarsCode AI</div>
<div class="abs" style="left:1111px;top:916px;height:20px;line-height:20px;font-size:13.3px;color:#a4a6b4;white-space:nowrap">6 Δ/N/A</div>
<div class="abs" style="left:1171px;top:916px;height:20px;line-height:20px;font-size:13.3px;color:#a4a6b4;white-space:nowrap">Blame: 胡鸿飞 2021/2/22 下午9:16 &nbsp; LF &nbsp; UTF-8 &nbsp; 4 个空格</div>
<div id="ai" class="abs"></div>
<div id="aihead" class="abs"></div>
<div class="abs" style="left:922px;top:26px;height:40px;line-height:40px;font-size:13.5px;font-weight:bold;color:#c2c3cf">MarsCode AI</div>
<div class="abs" style="left:1337px;top:34px;width:86px;height:21px;border:1px solid #454654;border-radius:4px;line-height:19px;text-align:center;font-size:13.8px;color:#d6d7e2">New Chat</div>
<div class="abs cb" style="left:927px;top:73px;width:579px;height:179px"></div>
<div class="abs al mono" style="left:941px;top:76px">    <span class="ap">cursor</span>: <span class="av">pointer</span>;</div>
<div class="abs al mono" style="left:941px;top:98px">    <span class="ap">text-align</span>: <span class="av">center</span>;</div>
<div class="abs al mono" style="left:941px;top:120px"><span class="ab">}</span></div>
<div class="abs al mono" style="left:941px;top:164px"><span class="aw">.</span><span class="ag">topBar</span><span class="aw">.</span><span class="ag">topMenu</span> <span class="ag">a</span><span class="aw">.</span><span class="ag">active</span> <span class="ab">{</span></div>
<div class="abs al mono" style="left:941px;top:186px">    <span class="ap">color</span>: <span class="av">#08408D</span>;</div>
<div class="abs al mono" style="left:941px;top:208px"><span class="ab">}</span></div>
<div class="abs gl" style="left:930px;top:181px;width:213px;height:3px"></div>
<div class="abs para" style="left:926px;top:269px;width:600px;white-space:nowrap">请注意，这种转换可能会导致样式在不同设备上的显示效果不一致，因为不同设备的屏幕分辨率和像<br>素密度不同。在实际开发中，通常会使用 <span class="or">rem</span> 作为字体大小和布局尺寸的单位，以确保在不同设备上<br>的显示效果一致。</div>
<div class="abs" style="left:1421px;top:364px;height:20px;line-height:20px;font-size:13px;font-weight:500;color:#acadb9;white-space:nowrap;letter-spacing:.6px">银眼雪狼</div>
<div class="abs" style="left:1487px;top:363px;width:20px;height:20px;border-radius:50%;background:#8a63f0;overflow:hidden"><div class="abs" style="left:6px;top:4px;width:8px;height:8px;border-radius:50%;background:#2a2250"></div><div class="abs" style="left:3px;top:12px;width:14px;height:12px;border-radius:7px 7px 0 0;background:#2a2250"></div></div>
<div class="abs" style="left:1077px;top:378px;width:430px;height:58px;background:#38393f;border:8px solid #05f22f"></div>
<div class="abs" style="left:1092px;top:402px;height:20px;line-height:20px;font-size:13px;font-weight:500;color:#f4f4f8;white-space:nowrap">我让你保留<b>css</b>选择器中的空格，你却给删掉了，重新转换选中的代码</div>
<div class="abs" style="left:952px;top:453px;height:20px;line-height:20px;font-size:14.6px;font-weight:bold;color:#c9cad6;white-space:nowrap">MarsCode AI</div>
<div class="abs" style="left:926px;top:482px;height:18px;line-height:18px;font-size:12px;color:#6a6b7a;white-space:nowrap">引用 1 个相关信息 ›</div>
<div class="abs para" style="left:926px;top:504px;width:600px;white-space:nowrap">非常抱歉，我之前的回答没有保留 CSS 选择器中的空格。根据您的要求，将选中的代码中的 <span class="or">rem</span> 转<br>换为 <span class="or">px</span>，假设根字体大小为 <span class="or">100px</span>，则 <span class="or">1rem</span> 等于 <span class="or">100px</span>。因此，转换后的代码如下：</div>
<div class="abs cb" style="left:927px;top:553px;width:578px;height:237px"></div>
<div class="abs" style="left:927px;top:587px;width:579px;height:1px;background:#3a3b44"></div>
<div class="abs" style="left:944px;top:561px;height:20px;line-height:20px;font-size:13px;color:#b7b8c4;white-space:nowrap"><span style="color:#4a78e8;font-weight:bold;font-style:italic;font-size:15px">#</span><span style="font-size:13.8px;margin-left:3px">css</span></div>
<div class="abs al mono" style="left:941px;top:597px"><span class="aw">.</span><span class="ag">topBar</span> <span class="ab">{</span></div>
<div class="abs al mono" style="left:941px;top:619px">    <span class="ap">width</span>: <span class="av">100</span>%;</div>
<div class="abs al mono" style="left:941px;top:641px">    <span class="ap">height</span>: <span class="av">50px</span>;</div>
<div class="abs al mono" style="left:941px;top:663px">    <span class="ap">padding</span>: <span class="av">6px</span> <span class="av">0</span>;</div>
<div class="abs al mono" style="left:941px;top:685px"><span class="ab">}</span></div>
<div class="abs al mono" style="left:941px;top:729px"><span class="aw">.</span><span class="ag">topBar</span><span class="aw">.</span><span class="ag">topBarContent</span> <span class="ab">{</span></div>
<div class="abs al mono" style="left:941px;top:751px">    <span class="ap">width</span>: <span class="av">792px</span>;</div>
<div class="abs mono" style="left:941px;top:773px;height:17px;overflow:hidden"><div class="al">    <span class="ap">height</span>: <span class="av">100</span>%;</div></div>
<div class="abs gl" style="left:926px;top:747px;width:205px;height:3px"></div>
<div class="abs" style="left:1509px;top:518px;width:8px;height:129px;background:#4f505d;border-radius:4px"></div>
<div class="abs" style="left:929px;top:813px;width:584px;height:73px;border-radius:5px;background:linear-gradient(90deg,#3f62d8 0%,#4a6ae0 45%,#6a5fe0 70%,#d08a5a 82%,#a050e0 90%,#b044e8 100%)"></div>
<div class="abs" style="left:930px;top:814px;width:582px;height:71px;border-radius:4px;background:#3b3c48"></div>
<div class="abs" style="left:940px;top:824px;height:20px;line-height:20px;font-size:13px;color:#6b6c7a;white-space:nowrap">输入消息或者“/”来选择指令</div>
<div id="rstrip" class="abs"></div>
<div class="abs" style="left:1543px;top:110px;width:30px;height:30px;border-radius:7px;background:#2a2b37"></div>
<div class="abs" style="left:165px;top:37px;font-size:7px;line-height:7px;color:#7d7f8d;font-family:'Liberation Mono',monospace;letter-spacing:-.2px">101<br>0</div>
<div class="abs" style="left:171px;top:46px;width:9.5px;height:7px;background:#e6e06e;color:#1d1d22;font-size:7px;line-height:7.5px;font-weight:bold;text-align:center;letter-spacing:-.3px">JS</div>
<div class="abs" style="left:312px;top:39px;width:12px;height:12px;border-radius:2.5px;background:#f0b54a;color:#3a2c10;font-size:8.5px;line-height:12.5px;font-weight:bold;text-align:center;letter-spacing:-.4px">JS</div>
<div class="abs" style="left:449px;top:39px;width:12px;height:12px;border-radius:2.5px;background:#f0b54a;color:#3a2c10;font-size:8.5px;line-height:12.5px;font-weight:bold;text-align:center;letter-spacing:-.4px">JS</div>
<svg class="abs" style="left:659.5px;top:38px" width="13.5" height="14" viewBox="0 0 13.5 14" ><path d="M0.5 0h12.5l-1.1 11.6L6.75 14 1.6 11.6z" fill="#5548e6"/><path d="M3.6 3h6.4l-.2 2.2H5.9M9.7 5.6H4.2M9.7 5.6l-.3 4-2.65 1-2.6-1-.1-1.4" fill="none" stroke="#fff" stroke-width="1.5"/></svg>
<svg class="abs" style="left:858px;top:40px" width="12" height="10" viewBox="0 0 12 10" ><path d="M1.5 2.5L6 7l4.5-4.5" fill="none" stroke="#c8c9d5" stroke-width="1.4" stroke-linecap="round" stroke-linejoin="round"/></svg>
<svg class="abs" style="left:888px;top:37px" width="4" height="16" viewBox="0 0 4 16" ><circle cx="2" cy="2.6" r="1.1" fill="#c8c9d5"/><circle cx="2" cy="8" r="1.1" fill="#c8c9d5"/><circle cx="2" cy="13.4" r="1.1" fill="#c8c9d5"/></svg>
<svg class="abs" style="left:640px;top:71px" width="17" height="16" viewBox="0 0 17 16" ><path d="M1.5 8.5C3.5 4.8 6 3.5 8.5 3.5s5 1.3 7 5c-2 3.7-4.500 5-7 5s-5-1.300-7-5z" fill="none" stroke="#c8c9d5" stroke-width="1.3"/><circle cx="8.500" cy="8.500" r="2.300" fill="none" stroke="#c8c9d5" stroke-width="1.300"/><path d="M3 14.500L14 2" stroke="#262733" stroke-width="3.200"/><path d="M3.500 14L13.500 2.500" stroke="#c8c9d5" stroke-width="1.300" stroke-linecap="round"/></svg>
<svg class="abs" style="left:668px;top:72px" width="13" height="13" viewBox="0 0 13 13" ><path d="M6.500 0.800L12.600 11.800H0.400z" fill="#f0913a" stroke="#f0913a" stroke-width="0.800" stroke-linejoin="round"/><rect x="5.800" y="4" width="1.400" height="4.300" fill="#262733"/><rect x="5.800" y="9.200" width="1.400" height="1.500" fill="#262733"/></svg>
<svg class="abs" style="left:698.5px;top:72px" width="13" height="13" viewBox="0 0 13 13" ><path d="M6.500 0.800L12.600 11.800H0.400z" fill="#f3eaa0" stroke="#f3eaa0" stroke-width="0.800" stroke-linejoin="round"/><rect x="5.800" y="4" width="1.400" height="4.300" fill="#262733"/><rect x="5.800" y="9.200" width="1.400" height="1.500" fill="#262733"/></svg>
<svg class="abs" style="left:727px;top:71px" width="14" height="16" viewBox="0 0 14 16" ><path d="M1.500 6.500L5 10l7.500-8" fill="none" stroke="#4caf6a" stroke-width="1.800" stroke-linecap="round" stroke-linejoin="round"/><path d="M1.500 13.500l2-1.500 2 1.500 2-1.500 2 1.500 2-1.500" fill="none" stroke="#4caf6a" stroke-width="1"/></svg>
<div class="abs" style="left:683.5px;top:70px;height:18px;line-height:18px;font-size:12px;color:#a7a9b6">9</div>
<div class="abs" style="left:713.5px;top:70px;height:18px;line-height:18px;font-size:12px;color:#a7a9b6">3</div>
<div class="abs" style="left:743.5px;top:70px;height:18px;line-height:18px;font-size:12px;color:#a7a9b6">8</div>
<svg class="abs" style="left:761px;top:74px" width="11" height="9" viewBox="0 0 11 9" ><path d="M1.500 6.500L5.500 2.500l4 4" fill="none" stroke="#c8c9d5" stroke-width="1.300" stroke-linecap="round" stroke-linejoin="round"/></svg>
<svg class="abs" style="left:781.5px;top:75px" width="11" height="9" viewBox="0 0 11 9" ><path d="M1.500 2.500L5.500 6.500l4-4" fill="none" stroke="#c8c9d5" stroke-width="1.300" stroke-linecap="round" stroke-linejoin="round"/></svg>
<svg class="abs" style="left:1430px;top:38px" width="16" height="14" viewBox="0 0 16 14" ><circle cx="5.800" cy="4" r="2.600" fill="none" stroke="#c8c9d5" stroke-width="1.200"/><path d="M1 12.200c0-3 2-4.600 4.800-4.600s4.800 1.600 4.800 4.600z" fill="none" stroke="#c8c9d5" stroke-width="1.200" stroke-linejoin="round"/><path d="M10 1.500a2.600 2.600 0 0 1 0 5.100M12 8c2 .6 3 2 3 4.200h-2" fill="none" stroke="#c8c9d5" stroke-width="1.200" stroke-linecap="round"/></svg>
<svg class="abs" style="left:1456px;top:37px" width="16" height="16" viewBox="0 0 16 16" ><path d="M8 1.200l1.700 1.300 2.100-.3 .8 2 1.900 1-.6 2.100 .6 2-1.900 1-.8 2-2.100-.3L8 14.800l-1.700-1.300-2.100 .3-.8-2-1.900-1 .6-2-.6-2.100 1.900-1 .8-2 2.100 .3z" fill="none" stroke="#c8c9d5" stroke-width="1.200" stroke-linejoin="round"/><circle cx="8" cy="8" r="2.300" fill="none" stroke="#c8c9d5" stroke-width="1.200"/></svg>
<svg class="abs" style="left:1488px;top:37px" width="4" height="16" viewBox="0 0 4 16" ><circle cx="2" cy="2.600" r="1.100" fill="#c8c9d5"/><circle cx="2" cy="8" r="1.100" fill="#c8c9d5"/><circle cx="2" cy="13.400" r="1.100" fill="#c8c9d5"/></svg>
<div class="abs" style="left:1510px;top:44px;width:13px;height:2px;background:#6c6d7b;border-radius:1px"></div>
<svg class="abs" style="left:1549px;top:35px" width="19" height="20" viewBox="0 0 19 20" ><path d="M2 15.500h13.500c-1.300-1.300-1.800-2.700-1.800-5V8c0-3-2-5.200-5-5.200S3.800 5 3.800 8v2.500c0 2.300-.5 3.700-1.800 5z" fill="none" stroke="#c8c9d5" stroke-width="1.400" stroke-linejoin="round"/><path d="M7.200 17.300h3l-1.500 1.500z" fill="#c8c9d5"/><circle cx="15.700" cy="4" r="3.600" fill="#4a7af6"/></svg>
<svg class="abs" style="left:1548px;top:75px" width="20" height="20" viewBox="0 0 20 20" ><g transform="translate(10 10)" fill="none" stroke="#c8c9d5" stroke-width="1.5" stroke-linecap="round"><path d="M-7.10 -6.50C-6.55 -6.68 -4.98 -7.38 -3.80 -7.60C-2.62 -7.82 -1.38 -7.97 0.00 -7.80C1.38 -7.63 3.23 -7.43 4.50 -6.60C5.77 -5.77 7.08 -4.07 7.60 -2.80C8.12 -1.53 7.93 -0.12 7.60 1.00C7.27 2.12 6.43 3.23 5.60 3.90C4.77 4.57 3.70 4.95 2.60 5.00C1.50 5.05 -0.02 4.70 -1.00 4.20C-1.98 3.70 -2.92 2.83 -3.30 2.00C-3.68 1.17 -3.62 -0.10 -3.30 -0.80C-2.98 -1.50 -1.72 -1.97 -1.40 -2.20"/><path d="M-7.10 -6.50C-6.55 -6.68 -4.98 -7.38 -3.80 -7.60C-2.62 -7.82 -1.38 -7.97 0.00 -7.80C1.38 -7.63 3.23 -7.43 4.50 -6.60C5.77 -5.77 7.08 -4.07 7.60 -2.80C8.12 -1.53 7.93 -0.12 7.60 1.00C7.27 2.12 6.43 3.23 5.60 3.90C4.77 4.57 3.70 4.95 2.60 5.00C1.50 5.05 -0.02 4.70 -1.00 4.20C-1.98 3.70 -2.92 2.83 -3.30 2.00C-3.68 1.17 -3.62 -0.10 -3.30 -0.80C-2.98 -1.50 -1.72 -1.97 -1.40 -2.20" transform="rotate(180)"/></g></svg>
<svg class="abs" style="left:1547px;top:118.5px" width="23.1" height="14.3" viewBox="0 0 21 13" ><path d="M2.500 10.500L10 2.500" stroke="#f2f2f6" stroke-width="3.400" stroke-linecap="round"/><path d="M10.500 10.500L17 3.300" stroke="#b9bac6" stroke-width="3.400" stroke-linecap="round"/><circle cx="18" cy="10.500" r="2" fill="#f2f2f6"/></svg>
<svg class="abs" style="left:929px;top:457px" width="15.96" height="9.88" viewBox="0 0 21 13" ><path d="M2.500 10.500L10 2.500" stroke="#f2f2f6" stroke-width="3.400" stroke-linecap="round"/><path d="M10.500 10.500L17 3.300" stroke="#b9bac6" stroke-width="3.400" stroke-linecap="round"/><circle cx="18" cy="10.500" r="2" fill="#f2f2f6"/></svg>
<svg class="abs" style="left:977px;top:920px" width="18.9" height="11.7" viewBox="0 0 21 13" ><path d="M2.500 10.500L10 2.500" stroke="#e6e6ec" stroke-width="3.400" stroke-linecap="round"/><path d="M10.500 10.500L17 3.300" stroke="#b0b1bd" stroke-width="3.400" stroke-linecap="round"/><circle cx="18" cy="10.500" r="2" fill="#e6e6ec"/></svg>
<svg class="abs" style="left:1418px;top:563px" width="14" height="15" viewBox="0 0 14 15" ><rect x="1.600" y="3.700" width="8.800" height="9.600" rx="1.600" fill="none" stroke="#c8c9d5" stroke-width="1.150"/><path d="M4 1.500h7a1.700 1.700 0 0 1 1.700 1.700v8" fill="none" stroke="#c8c9d5" stroke-width="1.150"/><path d="M3.900 6.500h4.200M3.900 8.600h4.200M3.900 10.700h4.200" stroke="#c8c9d5" stroke-width="1"/></svg>
<svg class="abs" style="left:1446px;top:563px" width="16" height="15" viewBox="0 0 16 15" ><rect x="5.800" y="1.900" width="7.600" height="4.600" rx="1.400" fill="none" stroke="#c8c9d5" stroke-width="1.150"/><rect x="5.800" y="9.300" width="7.600" height="4.600" rx="1.400" fill="none" stroke="#c8c9d5" stroke-width="1.150"/><path d="M2.200 5.700L4.400 7.800 2.200 9.900" fill="none" stroke="#c8c9d5" stroke-width="1.100"/></svg>
<svg class="abs" style="left:1477px;top:563px" width="14" height="15" viewBox="0 0 14 15" ><path d="M5.500 13.400H3.200a1.400 1.400 0 0 1-1.400-1.400V5.600L6 1.600h3.300a1.400 1.400 0 0 1 1.400 1.400v6.200" fill="none" stroke="#c8c9d5" stroke-width="1.150" stroke-linejoin="round"/><path d="M1.800 5.600H6V1.600" fill="none" stroke="#c8c9d5" stroke-width="1.150" stroke-linejoin="round"/><path d="M10.600 9.800v5M8.100 12.300h5" stroke="#c8c9d5" stroke-width="1.200"/></svg>
<svg class="abs" style="left:941px;top:854.5px" width="17" height="17" viewBox="0 0 17 17" ><path d="M3.300 14.300L9.200 8.200" stroke="#b4b5c2" stroke-width="1.800" stroke-linecap="round"/><path d="M9 1.800v2.200M13.500 3.700l-1.500 1.700M16 8.500h-2.500M13.600 13.200l-1.700-1.600M4.500 3.700L6 5.400M2 8.500h2.600M9 12.800v2.300" stroke="#b4b5c2" stroke-width="1.600"/></svg>
<svg class="abs" style="left:967px;top:855px" width="16" height="16" viewBox="0 0 16 16" ><path d="M5.800 1.500L4.800 14.500M10.800 1.500l-1 13M1 5.700h13.500M0.500 10h13.500" stroke="#b9bac6" stroke-width="1.250" stroke-linecap="round"/></svg>
<svg class="abs" style="left:1481px;top:855px" width="18" height="16" viewBox="0 0 18 16" ><path d="M16.500 1L1.500 8l4.500 2 1.500 4.500 2.500-3 3.500 2z" fill="#9a9ba8"/><path d="M16.500 1L6 10l1.500 4.500" fill="none" stroke="#3b3c48" stroke-width="0.900"/></svg>
<svg class="abs" style="left:1093px;top:919px" width="14" height="14" viewBox="0 0 14 14" ><circle cx="7" cy="7" r="7" fill="#3767d6"/><path d="M7 3.300L10.600 9.800H3.400z" fill="none" stroke="#dfe6fb" stroke-width="1.300" stroke-linejoin="round"/></svg>
</div></div></div>
<svg class="abs" style="left:1096px;top:681px" width="17" height="24" viewBox="-2 -2 17 24"><path d="M0 0V17L4 13.5 6.5 19.5 9 18.5 6.500 12.800 12.500 12.600Z" fill="#151517" stroke="#f4f4f4" stroke-width="1" stroke-linejoin="round"/></svg>
<div class="abs" style="left:1290px;top:904px;height:36px;line-height:36px;font-size:24px;color:#ececf0;white-space:nowrap;word-spacing:3px;letter-spacing:.25px;text-shadow:1px 1px 1px #15151a,-1px 1px 1px #15151a,0 0 3px #222">掘金技术社区 @ 银眼雪狼</div>
</body>
</html>
